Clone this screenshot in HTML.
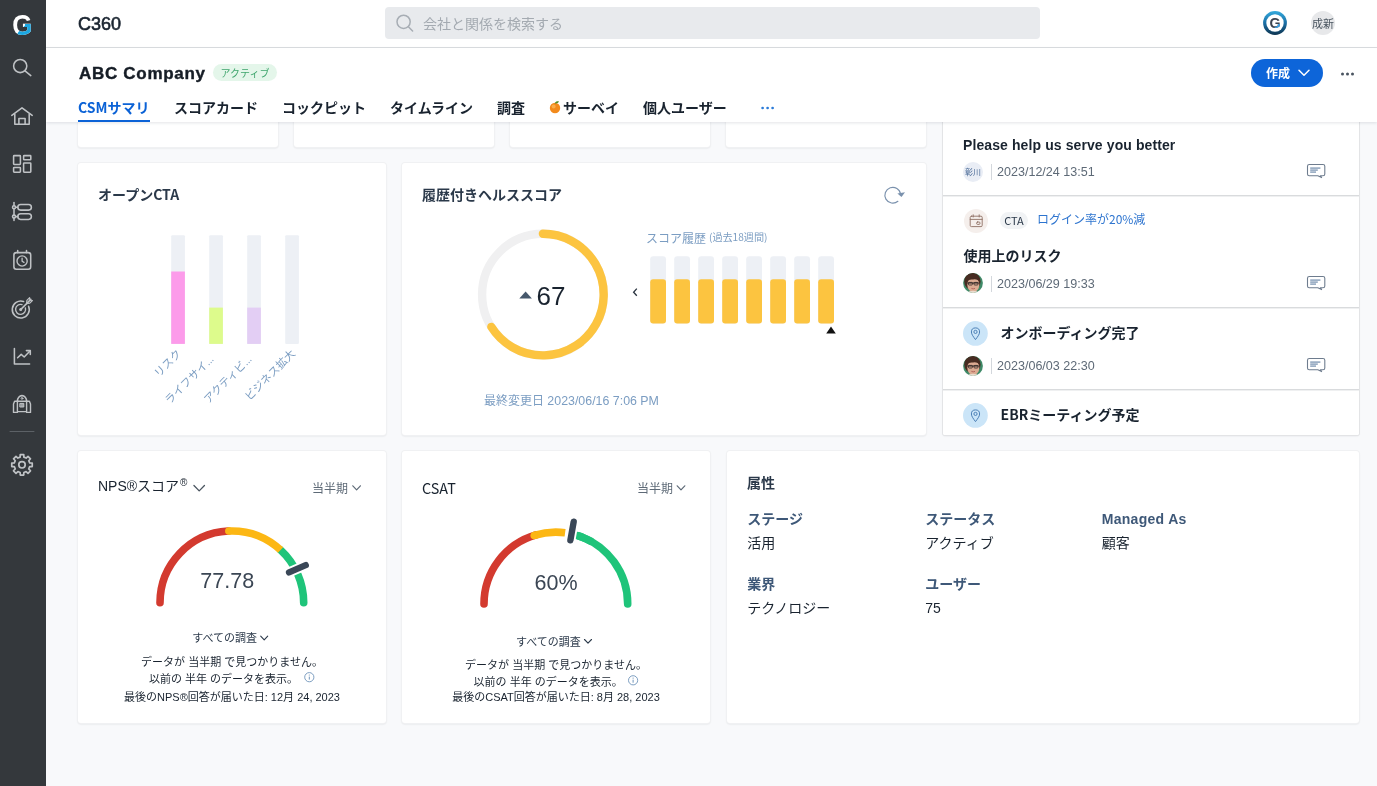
<!DOCTYPE html>
<html lang="ja">
<head>
<meta charset="utf-8">
<title>C360</title>
<style>
*{box-sizing:border-box;margin:0;padding:0}
html,body{width:1377px;height:786px;overflow:hidden}
body{position:relative;background:#f8f9fb;font-family:"Liberation Sans","Noto Sans CJK JP",sans-serif;color:#19232f;font-size:13px}
.abs{position:absolute}
#cards,#top,#hdr,#tabs,#side{will-change:transform}
.jp{font-family:"Noto Sans CJK JP","Liberation Sans",sans-serif}
#side{position:absolute;left:0;top:0;width:46px;height:786px;background:#34383c}
#side svg{position:absolute;left:0}
#top{position:absolute;left:46px;top:0;width:1331px;height:48px;background:#fff;border-bottom:1px solid #dcdee1}
#hdr{position:absolute;left:46px;top:48px;width:1331px;height:74px;background:#fff;box-shadow:0 1px 3px rgba(40,50,70,.13)}
.card{position:absolute;background:#fff;border-radius:3px;box-shadow:0 0 0 1px #f0f1f3,0 1px 2px rgba(20,25,35,.16)}
#c-tl{border-radius:2px;box-shadow:0 0 0 1px #e3e4e6,0 1px 2px rgba(20,25,35,.12)}
.tli{left:0;width:416px;background:#fff;border-bottom:1px solid #d9dbdd;border-top:1px solid #eff0f1}
.ctr{text-align:center;font-size:11px;line-height:16px !important;color:#19232f}
.t{position:absolute;white-space:nowrap;line-height:1}
.tab{position:absolute;top:99px;font-size:14px;font-weight:700;line-height:16px;white-space:nowrap;color:#19232f}
</style>
</head>
<body>
<div id="cards">
  <div class="card" style="left:78px;top:100px;width:200px;height:47px"></div>
  <div class="card" style="left:294px;top:100px;width:200px;height:47px"></div>
  <div class="card" style="left:510px;top:100px;width:200px;height:47px"></div>
  <div class="card" style="left:726px;top:100px;width:200px;height:47px"></div>
  <div class="card" id="c-cta" style="left:78px;top:163px;width:308px;height:272px">
  <div class="t jp" style="left:20px;top:22px;font-size:14px;line-height:18px;font-weight:700;color:#2b394a">オープンCTA</div>
  <svg class="abs" style="left:0;top:0" width="308" height="272" viewBox="78 163 308 272">
<rect x="171.2" y="235.3" width="13.7" height="108.6" rx="1" fill="#edf0f5"/><rect x="171.2" y="271.5" width="13.7" height="72.4" fill="#fc9bea"/><text transform="translate(182.1,354.3) rotate(-45)" text-anchor="end" font-family="Liberation Sans, Noto Sans CJK JP, sans-serif" font-size="11" fill="#7b9dc2">リスク</text>
<rect x="209.2" y="235.3" width="13.7" height="108.6" rx="1" fill="#edf0f5"/><rect x="209.2" y="307.6" width="13.7" height="36.3" fill="#ddfb8c"/><text transform="translate(214.3,360.1) rotate(-45)" text-anchor="end" font-family="Liberation Sans, Noto Sans CJK JP, sans-serif" font-size="11" fill="#7b9dc2">ライフサイ<tspan letter-spacing="-0.3">...</tspan></text>
<rect x="247.2" y="235.3" width="13.7" height="108.6" rx="1" fill="#edf0f5"/><rect x="247.2" y="307.6" width="13.7" height="36.3" fill="#e3cef4"/><text transform="translate(252.3,360.1) rotate(-45)" text-anchor="end" font-family="Liberation Sans, Noto Sans CJK JP, sans-serif" font-size="11" fill="#7b9dc2">アクティビ<tspan letter-spacing="-0.3">...</tspan></text>
<rect x="285.2" y="235.3" width="13.7" height="108.6" rx="1" fill="#edf0f5"/><text transform="translate(296.1,354.3) rotate(-45)" text-anchor="end" font-family="Liberation Sans, Noto Sans CJK JP, sans-serif" font-size="11" fill="#7b9dc2">ビジネス拡大</text>
</svg>
</div>
  <div class="card" id="c-health" style="left:402px;top:163px;width:524px;height:272px">
  <div class="t jp" style="left:20px;top:22px;font-size:14px;line-height:18px;font-weight:700;color:#2b394a">履歴付きヘルススコア</div>
  <div class="t jp" style="left:244px;top:67px;font-size:12px;line-height:16px;color:#7b9dc2">スコア履歴</div>
  <div class="t jp" style="left:307px;top:66.5px;font-size:10.1px;line-height:14px;color:#7b9dc2">(過去18週間)</div>
  <div class="t" style="left:82px;top:230px;font-size:12px;line-height:16px;color:#7b9dc2">最終変更日 <span style="font-size:12.4px">2023/06/16 7:06 PM</span></div>
  <svg class="abs" style="left:0;top:0" width="524" height="272" viewBox="402 163 524 272">
<circle cx="542.9" cy="294.6" r="60.8" fill="none" stroke="#f0f0f1" stroke-width="8.4"/><path d="M542.9 233.8 A60.8 60.8 0 1 1 491.36 326.86" fill="none" stroke="#fcc440" stroke-width="8.4" stroke-linecap="round"/>
<path d="M519.3 298.4 L525.6 291.6 L531.9 298.4Z" fill="#46586c"/><text x="536.5" y="305.2" font-family="Liberation Sans, Noto Sans CJK JP, sans-serif" font-size="26" fill="#19232f">67</text>
<rect x="650.2" y="256.2" width="15.8" height="67.2" rx="3" fill="#edf0f5"/><rect x="650.2" y="279.2" width="15.8" height="44.2" rx="3" fill="#fcc440"/><rect x="674.2" y="256.2" width="15.8" height="67.2" rx="3" fill="#edf0f5"/><rect x="674.2" y="279.2" width="15.8" height="44.2" rx="3" fill="#fcc440"/><rect x="698.2" y="256.2" width="15.8" height="67.2" rx="3" fill="#edf0f5"/><rect x="698.2" y="279.2" width="15.8" height="44.2" rx="3" fill="#fcc440"/><rect x="722.2" y="256.2" width="15.8" height="67.2" rx="3" fill="#edf0f5"/><rect x="722.2" y="279.2" width="15.8" height="44.2" rx="3" fill="#fcc440"/><rect x="746.2" y="256.2" width="15.8" height="67.2" rx="3" fill="#edf0f5"/><rect x="746.2" y="279.2" width="15.8" height="44.2" rx="3" fill="#fcc440"/><rect x="770.2" y="256.2" width="15.8" height="67.2" rx="3" fill="#edf0f5"/><rect x="770.2" y="279.2" width="15.8" height="44.2" rx="3" fill="#fcc440"/><rect x="794.2" y="256.2" width="15.8" height="67.2" rx="3" fill="#edf0f5"/><rect x="794.2" y="279.2" width="15.8" height="44.2" rx="3" fill="#fcc440"/><rect x="818.2" y="256.2" width="15.8" height="67.2" rx="3" fill="#edf0f5"/><rect x="818.2" y="279.2" width="15.8" height="44.2" rx="3" fill="#fcc440"/>
<path d="M826.2 333.4 L831 326.4 L835.8 333.4Z" fill="#111"/><path d="M636.8 288.6 L633.6 292.2 L636.8 295.8" fill="none" stroke="#2a3440" stroke-width="1.3"/><path d="M897.9 201.25 A7.9 7.9 0 1 1 900.6 194.1" fill="none" stroke="#7a91ad" stroke-width="1.15" stroke-linecap="round"/><path d="M897.4 193.4 L905 192.3 L901.5 197 Z" fill="#7a91ad"/></svg>
</div>
  <div class="card" id="c-tl" style="left:943px;top:100px;width:416px;height:335px;overflow:hidden">
  <div class="abs tli" style="top:0;height:96px"></div>
  <div class="abs tli" style="top:96px;height:112px"></div>
  <div class="abs tli" style="top:208px;height:82px"></div>
  <div class="abs tli" style="top:290px;height:46px"></div>
  <div class="t" style="left:20px;top:36px;font-size:14px;letter-spacing:.1px;line-height:18px;font-weight:700;color:#19232f">Please help us serve you better</div>
  <div class="abs" style="left:20px;top:61.7px;width:20px;height:20px;border-radius:10px;background:#e9edf5"></div>
  <div class="t jp" style="left:20px;top:61.7px;width:20px;text-align:center;font-size:8px;line-height:20px;color:#4a6a96">彰川</div>
  <div class="abs" style="left:48px;top:63.7px;width:1px;height:16px;background:#d3d7dc"></div><div class="t" style="left:54px;top:63.7px;font-size:12.55px;line-height:16px;color:#5e6a77">2023/12/24 13:51</div>
  <svg class="abs" style="left:362px;top:62px" width="24" height="18" viewBox="0 0 24 18" fill="none"><path d="M4.3 2.5 H18 Q19.8 2.5 19.8 4.3 V12 Q19.8 13.8 18 13.8 H15.4 L16.6 15.6 L12.8 13.8 H4.3 Q2.5 13.8 2.5 12 V4.3 Q2.5 2.5 4.3 2.5Z" stroke="#6e7c8e" stroke-width="1.1" stroke-linejoin="round"/><path d="M5.2 6.1 H15.4 M5.2 8.2 H12.8 M5.2 10.2 H11" stroke="#9db0c6" stroke-width="1.7"/></svg>
  <svg class="abs" style="left:20.5px;top:108.9px" width="24" height="24" viewBox="0 0 24 24" fill="none" stroke="#8f7064" stroke-width=".9" stroke-linecap="round" stroke-linejoin="round"><circle cx="12" cy="12" r="12" fill="#f5efec" stroke="none"/><rect x="6.2" y="7.2" width="12" height="10.4" rx="1.2"/><path d="M6.2 10.4 H18.2 M9.2 5.8 V8 M15.2 5.8 V8"/><rect x="12.6" y="13" width="3.4" height="2.4" rx="1"/></svg>
  <div class="abs" style="left:57px;top:112.4px;width:28px;height:17px;border-radius:8.5px;background:#f1f3f5"></div>
  <div class="t jp" style="left:57px;top:112.0px;width:28px;text-align:center;font-size:11px;line-height:17px;color:#2b394a">CTA</div>
  <div class="t jp" style="left:94px;top:111.2px;font-size:12px;line-height:16px;color:#2d74cf">ログイン率が20%減</div>
  <div class="t jp" style="left:20.4px;top:146.4px;font-size:14px;line-height:18px;font-weight:700;color:#19232f">使用上のリスク</div>
  <svg class="abs" style="left:20px;top:173.3px" width="20" height="20" viewBox="0 0 20 20"><defs><clipPath id="pc1"><circle cx="10" cy="10" r="9.9"/></clipPath></defs><g clip-path="url(#pc1)"><rect width="20" height="20" fill="#3f8a68"/><ellipse cx="9.4" cy="8.4" rx="8.2" ry="8.6" fill="#472c22"/><ellipse cx="10.3" cy="11.8" rx="6" ry="7.4" fill="#dcab92"/><path d="M3.4 8.2 Q5 2.6 10.4 2.8 Q15.6 3 16.6 8 Q13 5.6 10 6.6 Q6.6 6 3.4 8.2Z" fill="#472c22"/><path d="M4.6 10 H15.8" stroke="#2a2322" stroke-width="1.1"/><rect x="5.4" y="9.4" width="4" height="2.6" rx=".8" fill="none" stroke="#2a2322" stroke-width=".8"/><rect x="11" y="9.4" width="4" height="2.6" rx=".8" fill="none" stroke="#2a2322" stroke-width=".8"/><path d="M8.4 15.4 Q10.2 16.3 12 15.4" stroke="#b0615a" stroke-width=".9" fill="none"/><path d="M3 20 Q10 15.5 17 20Z" fill="#e9dccf"/></g></svg>
  <div class="abs" style="left:48px;top:175.5px;width:1px;height:16px;background:#d3d7dc"></div><div class="t" style="left:54px;top:175.5px;font-size:12.55px;line-height:16px;color:#5e6a77">2023/06/29 19:33</div>
  <svg class="abs" style="left:362px;top:174px" width="24" height="18" viewBox="0 0 24 18" fill="none"><path d="M4.3 2.5 H18 Q19.8 2.5 19.8 4.3 V12 Q19.8 13.8 18 13.8 H15.4 L16.6 15.6 L12.8 13.8 H4.3 Q2.5 13.8 2.5 12 V4.3 Q2.5 2.5 4.3 2.5Z" stroke="#6e7c8e" stroke-width="1.1" stroke-linejoin="round"/><path d="M5.2 6.1 H15.4 M5.2 8.2 H12.8 M5.2 10.2 H11" stroke="#9db0c6" stroke-width="1.7"/></svg>
  <svg class="abs" style="left:20.0px;top:221.0px" width="24.8" height="24.8" viewBox="0 0 24.8 24.8"><circle cx="12.4" cy="12.4" r="12.4" fill="#cbe5f8"/><path d="M12.5 18.6 C10.6 16 8.4 13.4 8.4 11 A4.1 4.1 0 0 1 16.6 11 C16.6 13.4 14.4 16 12.5 18.6Z" fill="none" stroke="#4b80b6" stroke-width="1" stroke-linejoin="round"/><circle cx="12.5" cy="10.9" r="1.6" fill="none" stroke="#4b80b6" stroke-width="1"/></svg>
  <div class="t jp" style="left:57.6px;top:222.8px;font-size:14px;line-height:18px;font-weight:700;color:#19232f">オンボーディング完了</div>
  <svg class="abs" style="left:20px;top:255.7px" width="20" height="20" viewBox="0 0 20 20"><defs><clipPath id="pc2"><circle cx="10" cy="10" r="9.9"/></clipPath></defs><g clip-path="url(#pc2)"><rect width="20" height="20" fill="#3f8a68"/><ellipse cx="9.4" cy="8.4" rx="8.2" ry="8.6" fill="#472c22"/><ellipse cx="10.3" cy="11.8" rx="6" ry="7.4" fill="#dcab92"/><path d="M3.4 8.2 Q5 2.6 10.4 2.8 Q15.6 3 16.6 8 Q13 5.6 10 6.6 Q6.6 6 3.4 8.2Z" fill="#472c22"/><path d="M4.6 10 H15.8" stroke="#2a2322" stroke-width="1.1"/><rect x="5.4" y="9.4" width="4" height="2.6" rx=".8" fill="none" stroke="#2a2322" stroke-width=".8"/><rect x="11" y="9.4" width="4" height="2.6" rx=".8" fill="none" stroke="#2a2322" stroke-width=".8"/><path d="M8.4 15.4 Q10.2 16.3 12 15.4" stroke="#b0615a" stroke-width=".9" fill="none"/><path d="M3 20 Q10 15.5 17 20Z" fill="#e9dccf"/></g></svg>
  <div class="abs" style="left:48px;top:258.0px;width:1px;height:16px;background:#d3d7dc"></div><div class="t" style="left:54px;top:258.0px;font-size:12.55px;line-height:16px;color:#5e6a77">2023/06/03 22:30</div>
  <svg class="abs" style="left:362px;top:255.60000000000002px" width="24" height="18" viewBox="0 0 24 18" fill="none"><path d="M4.3 2.5 H18 Q19.8 2.5 19.8 4.3 V12 Q19.8 13.8 18 13.8 H15.4 L16.6 15.6 L12.8 13.8 H4.3 Q2.5 13.8 2.5 12 V4.3 Q2.5 2.5 4.3 2.5Z" stroke="#6e7c8e" stroke-width="1.1" stroke-linejoin="round"/><path d="M5.2 6.1 H15.4 M5.2 8.2 H12.8 M5.2 10.2 H11" stroke="#9db0c6" stroke-width="1.7"/></svg>
  <svg class="abs" style="left:20.0px;top:302.8px" width="24.8" height="24.8" viewBox="0 0 24.8 24.8"><circle cx="12.4" cy="12.4" r="12.4" fill="#cbe5f8"/><path d="M12.5 18.6 C10.6 16 8.4 13.4 8.4 11 A4.1 4.1 0 0 1 16.6 11 C16.6 13.4 14.4 16 12.5 18.6Z" fill="none" stroke="#4b80b6" stroke-width="1" stroke-linejoin="round"/><circle cx="12.5" cy="10.9" r="1.6" fill="none" stroke="#4b80b6" stroke-width="1"/></svg>
  <div class="t jp" style="left:57.6px;top:305.4px;font-size:14px;line-height:18px;font-weight:700;color:#19232f">EBRミーティング予定</div>
</div>
  <div class="card" id="c-nps" style="left:78px;top:451px;width:308px;height:272px">
  <div class="t" style="left:20px;top:25.4px;font-size:14px;line-height:20px;color:#19232f">NPS®スコア<span style="font-size:10px;position:relative;top:-5px;left:1px">®</span></div>
  <div class="t jp" style="left:234px;top:28.8px;font-size:12px;line-height:16px;color:#5e6a77">当半期</div>
  <div class="t jp" style="left:114.3px;top:178px;font-size:11px;line-height:16px;color:#2b394a">すべての調査</div>
  <div class="t ctr" style="left:0;width:308px;top:203px">データが 当半期 で見つかりません。</div>
  <div class="t" style="left:71px;top:220px;font-size:11px;line-height:16px">以前の 半年 のデータを表示。</div>
  <div class="t ctr" style="left:0;width:308px;top:238px">最後のNPS®回答が届いた日: 12月 24, 2023</div>
  <svg class="abs" style="left:0;top:0" width="308" height="272" viewBox="78 451 308 272">
<path d="M160.00 602.80 A71.85 71.85 0 0 1 228.09 531.05" fill="none" stroke="#d33a2f" stroke-width="7.6" stroke-linecap="round"/><path d="M280.58 550.00 A71.85 71.85 0 0 1 303.70 602.80" fill="none" stroke="#1fc47a" stroke-width="7.6" stroke-linecap="round"/><path d="M228.84 531.01 A71.85 71.85 0 0 1 280.58 550.00" fill="none" stroke="#fcb714" stroke-width="7.6" stroke-linecap="butt"/><circle cx="228.84" cy="531.01" r="3.8" fill="#fcb714"/><path d="M289.06 572.44 L305.74 565.16" stroke="#fff" stroke-width="10" stroke-linecap="round"/><path d="M289.06 572.44 L305.74 565.16" stroke="#3a4757" stroke-width="6.4" stroke-linecap="round"/><text x="227.2" y="587.7" text-anchor="middle" font-family="Liberation Sans, Noto Sans CJK JP, sans-serif" font-size="21.5" fill="#3b4654">77.78</text><path d="M193.95 485.5 L199.2 490.9 L204.45 485.5" fill="none" stroke="#4a5560" stroke-width="1.3" stroke-linecap="round" stroke-linejoin="round"/><path d="M352.8 485.8 L356.6 489.8 L360.40000000000003 485.8" fill="none" stroke="#5e6a77" stroke-width="1.2" stroke-linecap="round" stroke-linejoin="round"/><path d="M260.7 636.2 L264.2 639.8 L267.7 636.2" fill="none" stroke="#2b394a" stroke-width="1.1" stroke-linecap="round" stroke-linejoin="round"/><g><circle cx="309.3" cy="677.2" r="4.6" fill="none" stroke="#6f94ba" stroke-width=".9"/><path d="M309.3 676.6 V679.6" stroke="#6f94ba" stroke-width="1"/><circle cx="309.3" cy="675.0" r=".6" fill="#6f94ba"/></g></svg>
</div>
  <div class="card" id="c-csat" style="left:402px;top:451px;width:308px;height:272px">
  <div class="t jp" style="left:20px;top:27px;font-size:14.4px;line-height:20px;color:#19232f">CSAT</div>
  <div class="t jp" style="left:235px;top:28.8px;font-size:12px;line-height:16px;color:#5e6a77">当半期</div>
  <div class="t jp" style="left:114px;top:182.2px;font-size:11px;line-height:16px;color:#2b394a">すべての調査</div>
  <div class="t ctr" style="left:0;width:308px;top:206px">データが 当半期 で見つかりません。</div>
  <div class="t" style="left:71.6px;top:223px;font-size:11px;line-height:16px">以前の 半年 のデータを表示。</div>
  <div class="t ctr" style="left:0;width:308px;top:237.6px">最後のCSAT回答が届いた日: 8月 28, 2023</div>
  <svg class="abs" style="left:0;top:0" width="308" height="272" viewBox="402 451 308 272">
<path d="M484.00 604.00 A71.85 71.85 0 0 1 536.05 534.93" fill="none" stroke="#d33a2f" stroke-width="7.6" stroke-linecap="round"/><path d="M577.69 535.55 A71.85 71.85 0 0 1 627.70 604.00" fill="none" stroke="#1fc47a" stroke-width="7.6" stroke-linecap="round"/><path d="M577.69 535.55 A71.85 71.85 0 0 1 591.77 541.78" fill="none" stroke="#1fc47a" stroke-width="7.6" stroke-linecap="butt"/><path d="M534.24 535.48 A71.85 71.85 0 0 1 565.10 532.75" fill="none" stroke="#fcb714" stroke-width="7.6" stroke-linecap="butt"/><circle cx="534.24" cy="535.48" r="3.8" fill="#fcb714"/><path d="M570.40 540.25 L573.70 521.75" stroke="#fff" stroke-width="10" stroke-linecap="round"/><path d="M570.40 540.25 L573.70 521.75" stroke="#3a4757" stroke-width="6.4" stroke-linecap="round"/><text x="556" y="589.5" text-anchor="middle" font-family="Liberation Sans, Noto Sans CJK JP, sans-serif" font-size="21.5" fill="#3b4654">60%</text><path d="M677.2 485.8 L681 489.8 L684.8 485.8" fill="none" stroke="#5e6a77" stroke-width="1.2" stroke-linecap="round" stroke-linejoin="round"/><path d="M584.5 639.5 L588 643.0999999999999 L591.5 639.5" fill="none" stroke="#2b394a" stroke-width="1.1" stroke-linecap="round" stroke-linejoin="round"/><g><circle cx="633.1" cy="680.3" r="4.6" fill="none" stroke="#6f94ba" stroke-width=".9"/><path d="M633.1 679.6999999999999 V682.6999999999999" stroke="#6f94ba" stroke-width="1"/><circle cx="633.1" cy="678.0999999999999" r=".6" fill="#6f94ba"/></g></svg>
</div>
  <div class="card" id="c-attr" style="left:727px;top:451px;width:632px;height:272px">
  <div class="t jp" style="left:20px;top:21.8px;font-size:14px;line-height:18px;font-weight:700;color:#2b394a">属性</div>
  <div class="t jp" style="left:20.2px;top:58.0px;font-size:14px;line-height:18px;font-weight:700;color:#3e5878">ステージ</div><div class="t jp" style="left:198.2px;top:58.0px;font-size:14px;line-height:18px;font-weight:700;color:#3e5878">ステータス</div><div class="t" style="left:374.7px;top:59px;font-size:14px;line-height:18px;font-weight:700;letter-spacing:.3px;color:#3e5878">Managed As</div>
  <div class="t" style="left:20.2px;top:82.8px;font-size:14px;line-height:18px;color:#19232f">活用</div><div class="t" style="left:198.2px;top:82.8px;font-size:14px;line-height:18px;color:#19232f">アクティブ</div><div class="t" style="left:374.7px;top:82.8px;font-size:14px;line-height:18px;color:#19232f">顧客</div>
  <div class="t jp" style="left:20.2px;top:122.8px;font-size:14px;line-height:18px;font-weight:700;color:#3e5878">業界</div><div class="t jp" style="left:198.2px;top:122.8px;font-size:14px;line-height:18px;font-weight:700;color:#3e5878">ユーザー</div>
  <div class="t" style="left:20.2px;top:147.7px;font-size:14px;line-height:18px;color:#19232f">テクノロジー</div><div class="t" style="left:198.2px;top:147.7px;font-size:14px;line-height:18px;color:#19232f">75</div>
</div>
</div>
<div id="top">
  <div class="t" style="left:32px;top:14px;font-size:18px;line-height:20px;color:#19232f;-webkit-text-stroke:.6px #19232f">C360</div>
  <div class="abs" style="left:339px;top:7px;width:655px;height:32px;background:#e8eaed;border-radius:4px"></div>
  <svg class="abs" style="left:347px;top:11px" width="24" height="24" viewBox="0 0 24 24" fill="none" stroke="#a7adb4" stroke-width="1.5" stroke-linecap="round"><circle cx="10.6" cy="10.8" r="6.6"/><path d="M15.4 15.8 L19.6 20"/></svg>
  <div class="t jp" style="left:377px;top:13px;font-size:14px;line-height:20px;color:#a4aab1">会社と関係を検索する</div>
  <svg class="abs" style="left:1216px;top:10px" width="26" height="26" viewBox="0 0 26 26">
    <defs><linearGradient id="gl" x1="0" y1="0" x2="0" y2="1"><stop offset="0" stop-color="#33a9dc"/><stop offset=".5" stop-color="#1b6fa6"/><stop offset="1" stop-color="#0d3450"/></linearGradient><clipPath id="gclip2"><polygon points="11,20 13,17 16,15.4 16,14 20,14 20,20"/></clipPath></defs>
    <circle cx="13" cy="13" r="11.9" fill="url(#gl)"/><circle cx="13" cy="13" r="8.7" fill="#fff"/>
    <text x="13.1" y="18.1" text-anchor="middle" font-family="Liberation Sans, sans-serif" font-weight="700" font-size="14.2" fill="#3b4350">G</text>
    <text x="13.1" y="18.1" text-anchor="middle" font-family="Liberation Sans, sans-serif" font-weight="700" font-size="14.2" fill="#3aa0e6" clip-path="url(#gclip2)">G</text>
  </svg>
  <div class="abs" style="left:1265px;top:11px;width:24px;height:24px;border-radius:12px;background:#e7e8ea"></div>
  <div class="t jp" style="left:1265px;top:11px;width:24px;text-align:center;font-size:11px;line-height:24px;color:#4a5560">成新</div>
</div>
<div id="hdr">
  <div class="t" style="left:33px;top:15.5px;font-size:17px;letter-spacing:.7px;line-height:20px;font-weight:700;color:#161d26;-webkit-text-stroke:.4px #161d26">ABC Company</div>
  <div class="abs" style="left:167px;top:16px;width:64px;height:17px;border-radius:9px;background:#e4f6ea"></div>
  <div class="t jp" style="left:167px;top:16px;width:64px;text-align:center;font-size:10px;line-height:17px;color:#3fa56d">アクティブ</div>
  <div class="abs" style="left:1205px;top:11px;width:72px;height:28px;border-radius:14px;background:#0d65d9"></div>
  <div class="t jp" style="left:1220px;top:16px;font-size:12px;line-height:18px;font-weight:700;color:#fff">作成</div>
  <svg class="abs" style="left:1251px;top:19px" width="14" height="12" viewBox="0 0 14 12" fill="none" stroke="#fff" stroke-width="1.5" stroke-linecap="round" stroke-linejoin="round"><path d="M2 3.2 L7 8.2 L12 3.2"/></svg>
  <svg class="abs" style="left:1293px;top:22px" width="18" height="8" viewBox="0 0 18 8" fill="#4a5460"><circle cx="3.5" cy="4" r="1.5"/><circle cx="8.5" cy="4" r="1.5"/><circle cx="13.5" cy="4" r="1.5"/></svg>
</div>
<div id="tabs">
  <div class="tab jp" style="left:78px;color:#0b62d6">CSMサマリ</div>
  <div class="abs" style="left:78px;top:120px;width:72px;height:2px;background:#0b62d6"></div>
  <div class="tab jp" style="left:174px">スコアカード</div>
  <div class="tab jp" style="left:282px">コックピット</div>
  <div class="tab jp" style="left:390px">タイムライン</div>
  <div class="tab jp" style="left:497px">調査</div>
  <svg class="abs" style="left:548px;top:100px" width="14" height="14" viewBox="0 0 14 14"><circle cx="7" cy="8" r="5.2" fill="#f28a1c"/><circle cx="5.6" cy="6.6" r="2" fill="#f9ae4a"/><path d="M6.8 3.4 C7.6 1.4 9.6 1 11 1.6 C10.4 3.2 8.6 3.9 6.8 3.4Z" fill="#4f8f2f"/></svg>
  <div class="tab jp" style="left:563px">サーベイ</div>
  <div class="tab jp" style="left:643px">個人ユーザー</div>
  <svg class="abs" style="left:759px;top:104px" width="18" height="8" viewBox="0 0 18 8" fill="#2b7bd8"><circle cx="3.6" cy="4" r="1.35"/><circle cx="8.6" cy="4" r="1.35"/><circle cx="13.6" cy="4" r="1.35"/></svg>
</div>
<div id="side">
<svg width="46" height="786" viewBox="0 0 46 786" fill="none" stroke="#bfc2c5" stroke-width="1.55" stroke-linecap="round" stroke-linejoin="round">
  <defs><clipPath id="gclip"><polygon points="15,38 18.4,31.9 25,25.6 25,24 34,24 34,38"/></clipPath></defs>
  <text transform="translate(22.2,35.3) scale(.9,1)" text-anchor="middle" font-family="Liberation Sans, sans-serif" font-weight="700" font-size="28.6" fill="#ffffff" stroke="none">G</text>
  <g clip-path="url(#gclip)"><text transform="translate(22.2,35.3) scale(.9,1)" text-anchor="middle" font-family="Liberation Sans, sans-serif" font-weight="700" font-size="28.6" fill="#1ba7e2" stroke="none">G</text></g>
  <circle cx="20.2" cy="66" r="6.6"/><path d="M25 70.9 L30.8 75.6"/>
  <path d="M11.8 115.4 L22 107.8 L32.2 115.4"/><path d="M14.8 114.2 V124.3 H29.2 V114.2"/><path d="M18.9 124.3 V118.4 H25.1 V124.3"/>
  <rect x="13.6" y="155.6" width="6.8" height="8.8" rx=".6"/><rect x="13.6" y="167.4" width="6.8" height="4.8" rx=".6"/>
  <rect x="23.6" y="155.6" width="7.2" height="4.2" rx=".6"/><rect x="23.6" y="163" width="7.2" height="9.2" rx=".6"/>
  <path d="M14 202.6 V220.4"/><path d="M15.6 207.3 H17.8 M15.6 216.6 H17.8"/>
  <circle cx="14" cy="207.3" r="1.5" fill="#34383c"/><circle cx="14" cy="216.6" r="1.5" fill="#34383c"/>
  <rect x="17.8" y="204.5" width="13.6" height="5.6" rx="2.8"/><rect x="17.8" y="213.8" width="13.6" height="5.6" rx="2.8"/>
  <rect x="13.9" y="252.6" width="16.8" height="16.6" rx="2.4"/><path d="M17.7 250.4 V252.6 M26.5 250.4 V252.6"/>
  <circle cx="22.1" cy="261" r="5.1" stroke-width="1.4"/><path d="M22.1 258.2 V261.2 L24 262.4" stroke-width="1.3"/>
  <path d="M28.6 306.2 A8.5 8.5 0 1 1 23.6 301.5" /><path d="M25.4 308 A5 5 0 1 1 22 304.6" stroke-width="1.4"/>
  <circle cx="20.7" cy="309.6" r="1.5" fill="#bfc2c5" stroke="none"/>
  <path d="M20.9 309.4 L30.8 299.4"/><path d="M26.6 303.6 L26.9 300.3 L29.6 297.6 L30 300.1 L32.4 300.5 L29.8 303.2 Z" stroke-width="1.2"/>
  <path d="M14.4 348.6 V364 H29.6"/><path d="M17.6 357.8 L21.2 354.4 L24.2 357 L30 351"/><path d="M26.4 350.6 H30.3 V354.4"/>
  <path d="M17.4 401.2 A4.6 5.6 0 0 1 26.6 401.2"/><rect x="17.4" y="401.2" width="9.2" height="10.4" stroke-width="1.4"/>
  <path d="M17.4 401.2 H14.6 L13.5 404 V412.4 H17.4 M26.6 401.2 H29.4 L30.5 404 V412.4 H26.6" stroke-width="1.4"/>
  <rect x="20.2" y="403.4" width="3.6" height="3.6" fill="#9da1a5" stroke-width="1"/><circle cx="22" cy="398.4" r=".9" stroke-width="1"/>
  <path d="M10 431.5 H34" stroke="#5c6166" stroke-width="1"/>
  <path d="M20.12 457.13 L20.24 454.55 L23.76 454.55 L23.88 457.13 L26.10 458.05 L28.00 456.31 L30.49 458.80 L28.75 460.70 L29.67 462.92 L32.25 463.04 L32.25 466.56 L29.67 466.68 L28.75 468.90 L30.49 470.80 L28.00 473.29 L26.10 471.55 L23.88 472.47 L23.76 475.05 L20.24 475.05 L20.12 472.47 L17.90 471.55 L16.00 473.29 L13.51 470.80 L15.25 468.90 L14.33 466.68 L11.75 466.56 L11.75 463.04 L14.33 462.92 L15.25 460.70 L13.51 458.80 L16.00 456.31 L17.90 458.05Z" stroke-width="1.7"/><circle cx="22" cy="464.8" r="3.2" stroke-width="1.7"/>
</svg>
</div>
</body>
</html>
